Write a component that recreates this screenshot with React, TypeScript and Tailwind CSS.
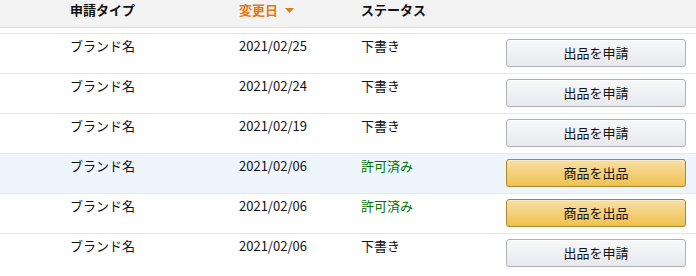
import React from 'react';

type Row = {
  brand: string;
  date: string;
  status: 'draft' | 'approved';
};

const ROWS: Row[] = [
  { brand: 'ブランド名', date: '2021/02/25', status: 'draft' },
  { brand: 'ブランド名', date: '2021/02/24', status: 'draft' },
  { brand: 'ブランド名', date: '2021/02/19', status: 'draft' },
  { brand: 'ブランド名', date: '2021/02/06', status: 'approved' },
  { brand: 'ブランド名', date: '2021/02/06', status: 'approved' },
  { brand: 'ブランド名', date: '2021/02/06', status: 'draft' },
];

const font = 'font-["Noto_Sans_CJK_JP","Liberation_Sans",sans-serif]';

export default function App() {
  return (
    <div className={`w-[696px] h-[276px] overflow-hidden bg-white text-[13px] text-[#111] ${font}`}>
      <div className="flex h-[28px] items-start border-b border-[#dddddd] bg-[#f3f3f3] pt-[1px] font-bold leading-[18px]">
        <div className="w-[239px] pl-[70px]">申請タイプ</div>
        <div className="flex w-[122px] items-center gap-[7px] text-[#e47911]">
          変更日
          <svg width="9" height="5" viewBox="0 0 9 5">
            <path d="M0 0h9L4.5 5z" fill="#e47911" />
          </svg>
        </div>
        <div>ステータス</div>
      </div>
      <div className="h-[5px]" />
      {ROWS.map((r, i) => (
        <div
          key={i}
          className={`flex h-[40px] border-t border-[#e7e7e7] leading-[18px] ${
            i === 3 ? 'bg-[#eef5fd]' : 'bg-white'
          }`}
        >
          <div className="w-[239px] pl-[70px] pt-[3px]">{r.brand}</div>
          <div className="w-[122px] pt-[3px]">{r.date}</div>
          <div className={`w-[145px] pt-[3px] ${r.status === 'approved' ? 'text-[#007600]' : ''}`}>
            {r.status === 'approved' ? '許可済み' : '下書き'}
          </div>
          <div className="pt-[5px]">
            {r.status === 'approved' ? (
              <button className="h-[28px] w-[180px] rounded-[3px] border border-[#a88734] bg-gradient-to-b from-[#f7dfa5] to-[#f0c14b] text-[13px] text-[#111] shadow-[inset_0_1px_0_rgba(255,255,255,0.4)]">
                商品を出品
              </button>
            ) : (
              <button className="h-[28px] w-[180px] rounded-[3px] border border-[#adb1b8] bg-gradient-to-b from-[#f7f8fa] to-[#e7e9ec] text-[13px] text-[#111] shadow-[inset_0_1px_0_rgba(255,255,255,0.6)]">
                出品を申請
              </button>
            )}
          </div>
        </div>
      ))}
    </div>
  );
}
